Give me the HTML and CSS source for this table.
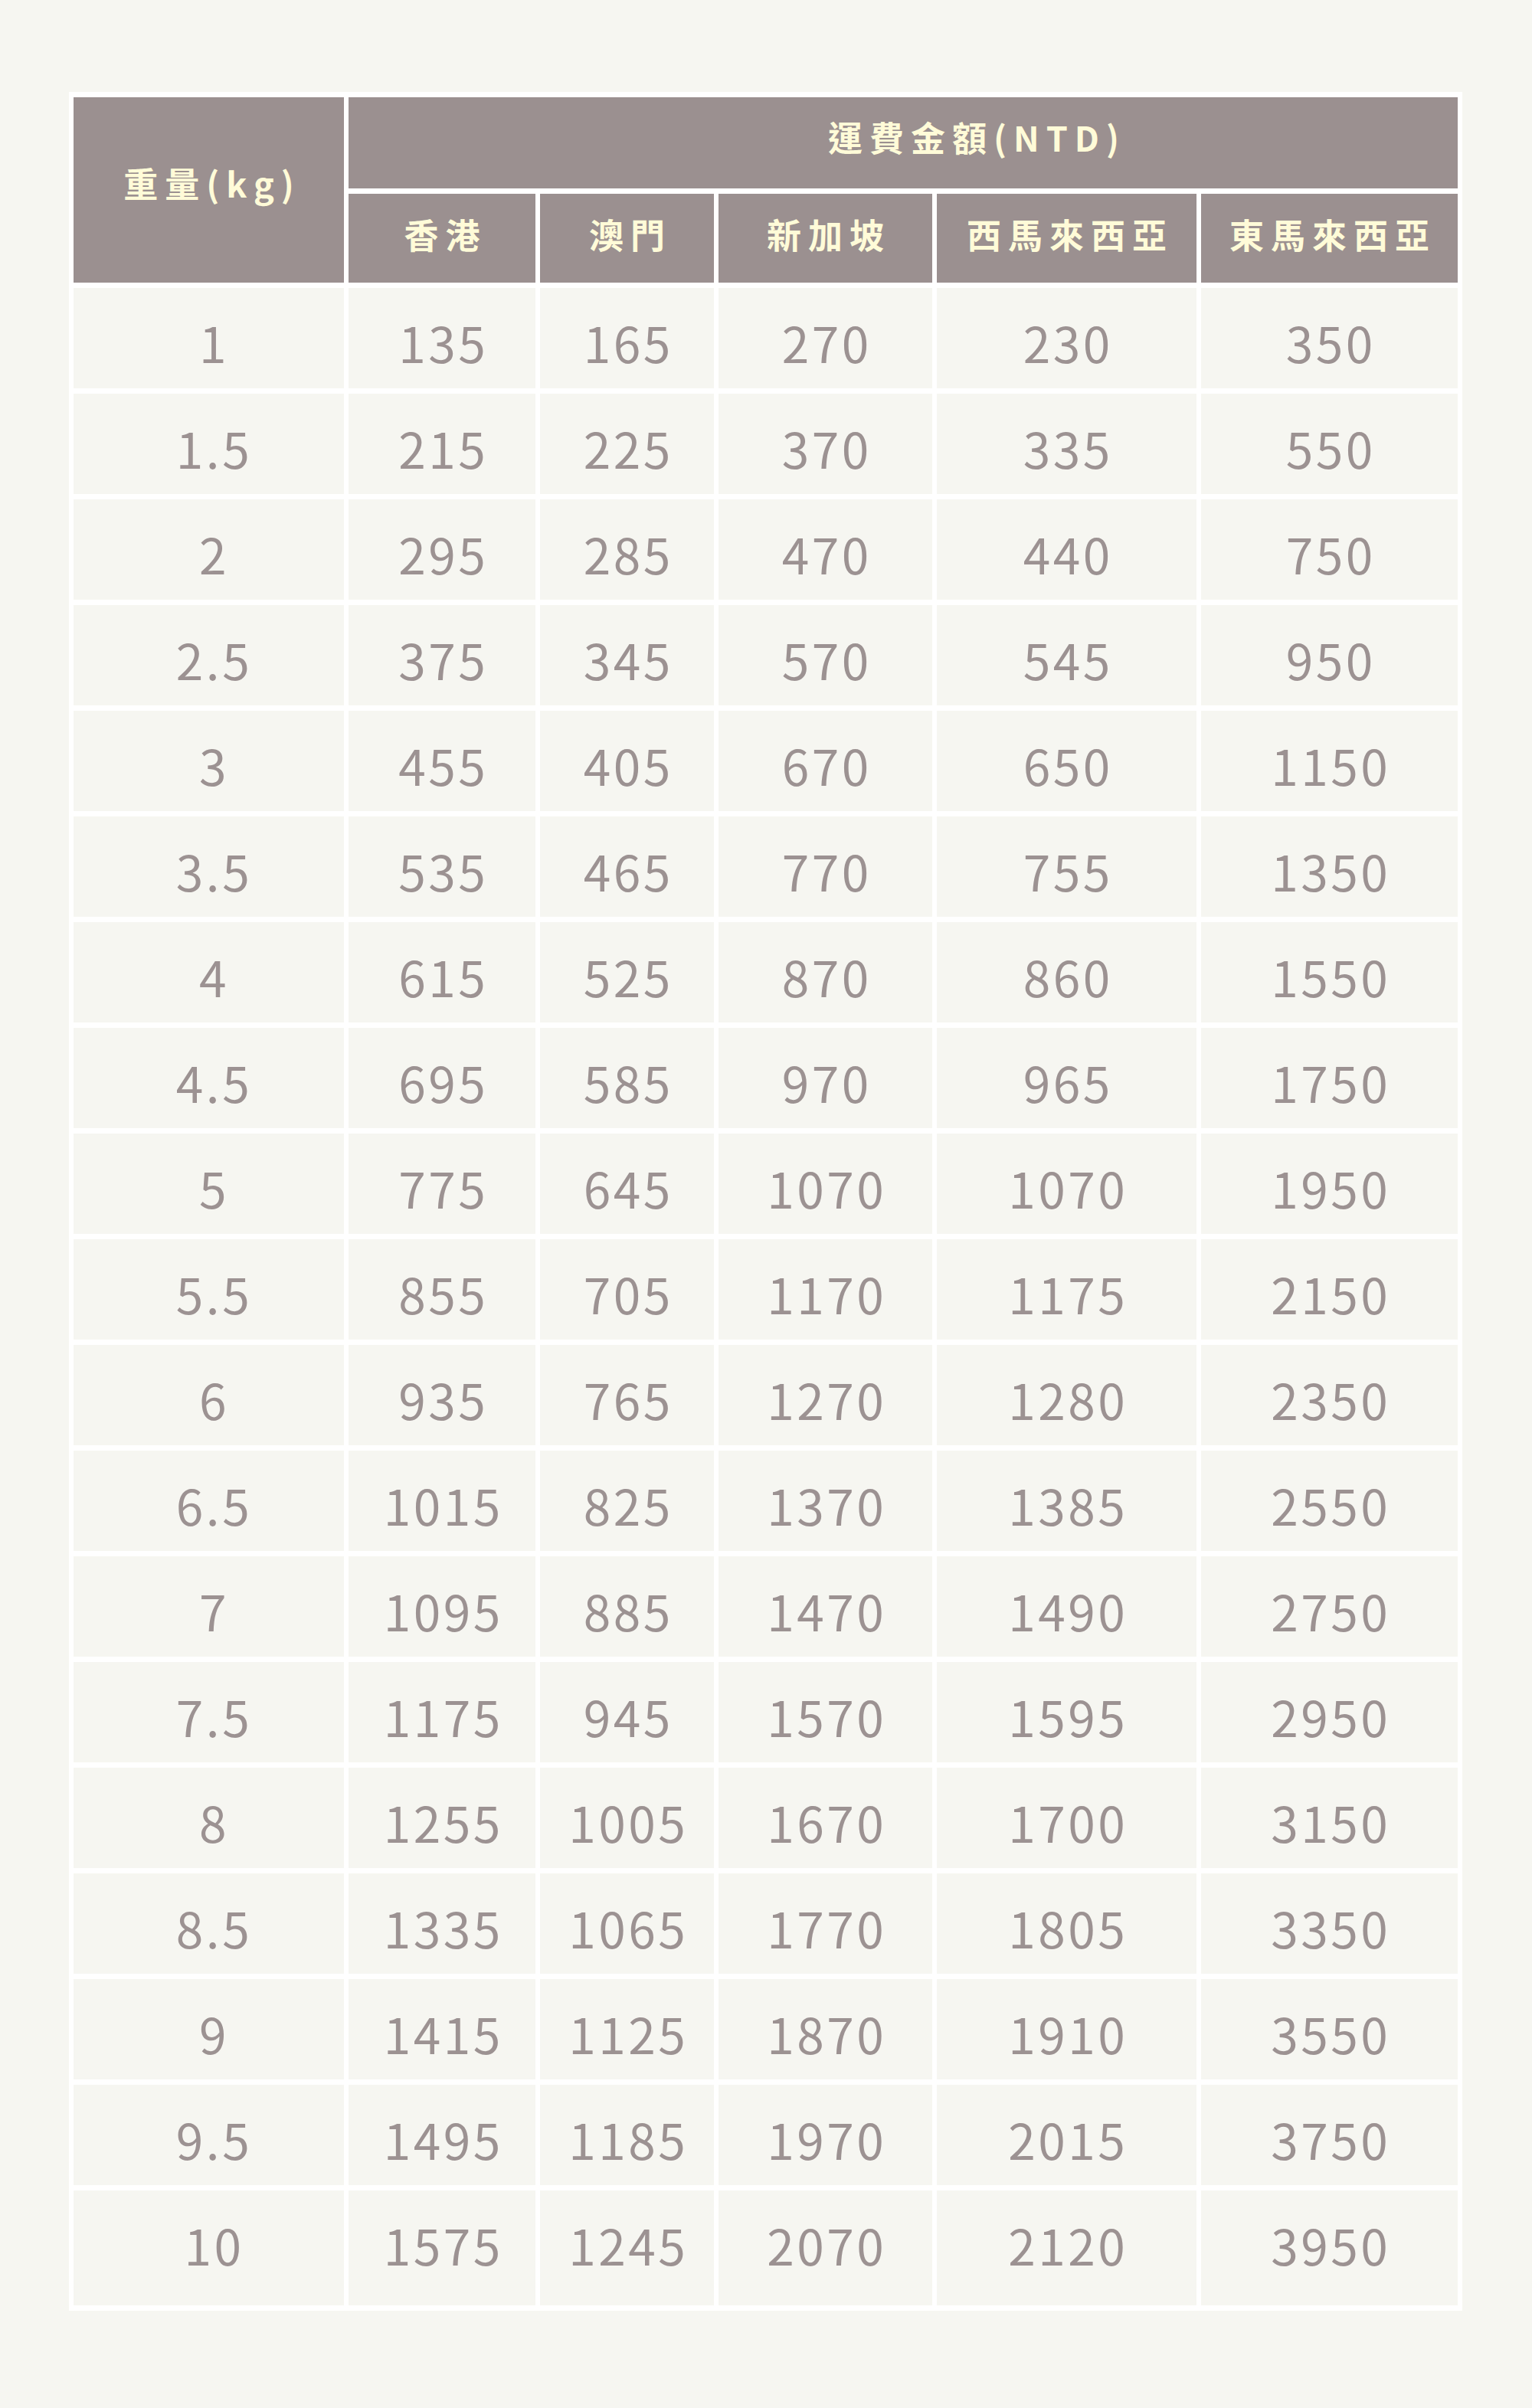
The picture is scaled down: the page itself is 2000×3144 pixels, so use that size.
FILE: index.html
```html
<!DOCTYPE html>
<html lang="zh-Hant">
<head>
<meta charset="utf-8">
<title>運費金額</title>
<link rel="stylesheet" href="styles.css">
</head>
<body>
<main class="page">
  <table class="rates">
    <colgroup>
      <col class="c-w">
      <col class="c-hk">
      <col class="c-mo">
      <col class="c-sg">
      <col class="c-wm">
      <col class="c-em">
    </colgroup>
    <thead>
      <tr class="head-1">
        <th rowspan="2" class="th-weight">重量(kg)</th>
        <th colspan="5" class="th-fee">運費金額(NTD)</th>
      </tr>
      <tr class="head-2">
        <th>香港</th>
        <th>澳門</th>
        <th>新加坡</th>
        <th>西馬來西亞</th>
        <th>東馬來西亞</th>
      </tr>
    </thead>
    <tbody>
      <tr><td class="w">1</td><td>135</td><td>165</td><td>270</td><td>230</td><td>350</td></tr>
      <tr><td class="w">1.5</td><td>215</td><td>225</td><td>370</td><td>335</td><td>550</td></tr>
      <tr><td class="w">2</td><td>295</td><td>285</td><td>470</td><td>440</td><td>750</td></tr>
      <tr><td class="w">2.5</td><td>375</td><td>345</td><td>570</td><td>545</td><td>950</td></tr>
      <tr><td class="w">3</td><td>455</td><td>405</td><td>670</td><td>650</td><td>1150</td></tr>
      <tr><td class="w">3.5</td><td>535</td><td>465</td><td>770</td><td>755</td><td>1350</td></tr>
      <tr><td class="w">4</td><td>615</td><td>525</td><td>870</td><td>860</td><td>1550</td></tr>
      <tr><td class="w">4.5</td><td>695</td><td>585</td><td>970</td><td>965</td><td>1750</td></tr>
      <tr><td class="w">5</td><td>775</td><td>645</td><td>1070</td><td>1070</td><td>1950</td></tr>
      <tr><td class="w">5.5</td><td>855</td><td>705</td><td>1170</td><td>1175</td><td>2150</td></tr>
      <tr><td class="w">6</td><td>935</td><td>765</td><td>1270</td><td>1280</td><td>2350</td></tr>
      <tr><td class="w">6.5</td><td>1015</td><td>825</td><td>1370</td><td>1385</td><td>2550</td></tr>
      <tr><td class="w">7</td><td>1095</td><td>885</td><td>1470</td><td>1490</td><td>2750</td></tr>
      <tr><td class="w">7.5</td><td>1175</td><td>945</td><td>1570</td><td>1595</td><td>2950</td></tr>
      <tr><td class="w">8</td><td>1255</td><td>1005</td><td>1670</td><td>1700</td><td>3150</td></tr>
      <tr><td class="w">8.5</td><td>1335</td><td>1065</td><td>1770</td><td>1805</td><td>3350</td></tr>
      <tr><td class="w">9</td><td>1415</td><td>1125</td><td>1870</td><td>1910</td><td>3550</td></tr>
      <tr><td class="w">9.5</td><td>1495</td><td>1185</td><td>1970</td><td>2015</td><td>3750</td></tr>
      <tr class="last"><td class="w">10</td><td>1575</td><td>1245</td><td>2070</td><td>2120</td><td>3950</td></tr>
    </tbody>
  </table>
</main>
</body>
</html>
```

FILE: styles.css
```css
html {
  background: #f6f6f1;
}
body {
  margin: 0;
  background: #f6f6f1;
  font-family: "Noto Sans CJK TC", "Noto Sans", sans-serif;
}
.page {
  padding: 120px 0 0 90px;
  min-height: 3024px;
}
.rates {
  table-layout: fixed;
  width: 1819px;
  border-collapse: separate;
  border-spacing: 6px 7px;
  background: #ffffff;
}
.c-w { width: 353px; }
.c-hk { width: 244px; }
.c-mo { width: 227px; }
.c-sg { width: 279px; }
.c-wm { width: 339px; }
.c-em { width: 335px; }

.rates th {
  background: #9b9090;
  color: #fffbd8;
  font-weight: 700;
  font-size: 45px;
  letter-spacing: 9px;
  padding: 0 0 12px 9px;
  text-align: center;
  vertical-align: middle;
  line-height: 1;
}
.head-1 { height: 119px; }
.head-2 { height: 116px; }
.rates th.th-weight {
  padding-bottom: 20px;
}
.rates th.th-fee {
  padding-left: 193px;
  padding-bottom: 16px;
}
.rates tbody tr {
  height: 131px;
}
.rates tbody tr.last {
  height: 150px;
}
.rates td {
  background: #f6f6f1;
  color: #9c9292;
  font-size: 64px;
  font-weight: 400;
  letter-spacing: 3.5px;
  padding: 9px 0 0 3.5px;
  text-align: center;
  vertical-align: middle;
  line-height: 1;
}
.rates td.w {
  padding-left: 14px;
}
.rates tr.last td {
  padding-top: 0;
  padding-bottom: 10px;
}
```
